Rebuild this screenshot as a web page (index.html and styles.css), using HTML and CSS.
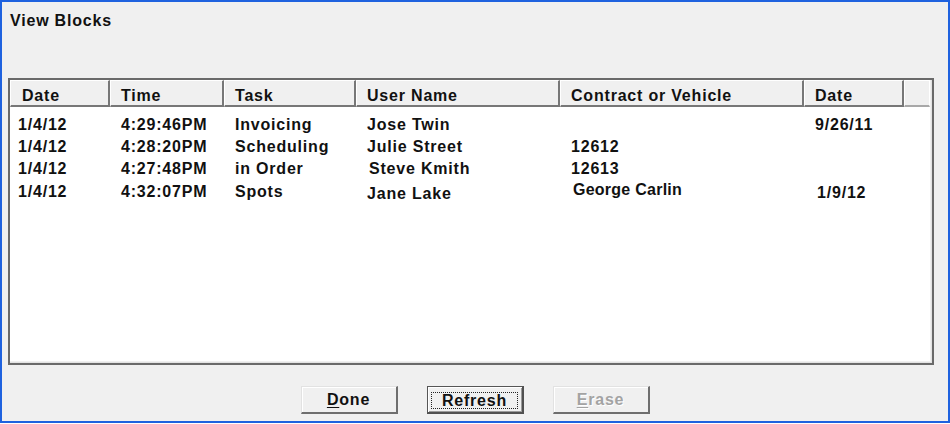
FILE: index.html
```html
<!DOCTYPE html>
<html>
<head>
<meta charset="utf-8">
<title>View Blocks</title>
<link rel="stylesheet" href="styles.css">
</head>
<body>
<div class="window">
  <div class="title">View Blocks</div>
  <div class="list">
    <div class="head">
      <div class="hcell first">Date</div>
      <div class="hcell">Time</div>
      <div class="hcell">Task</div>
      <div class="hcell">User Name</div>
      <div class="hcell">Contract or Vehicle</div>
      <div class="hcell">Date</div>
      <div class="hcell filler"></div>
    </div>
    <div class="rows">
      <div class="row">
        <div class="cell first">1/4/12</div>
        <div class="cell">4:29:46PM</div>
        <div class="cell">Invoicing</div>
        <div class="cell">Jose Twin</div>
        <div class="cell"></div>
        <div class="cell">9/26/11</div>
      </div>
      <div class="row">
        <div class="cell first">1/4/12</div>
        <div class="cell">4:28:20PM</div>
        <div class="cell">Scheduling</div>
        <div class="cell">Julie Street</div>
        <div class="cell">12612</div>
        <div class="cell"></div>
      </div>
      <div class="row">
        <div class="cell first">1/4/12</div>
        <div class="cell">4:27:48PM</div>
        <div class="cell">in Order</div>
        <div class="cell shift">Steve Kmith</div>
        <div class="cell">12613</div>
        <div class="cell"></div>
      </div>
      <div class="row">
        <div class="cell first">1/4/12</div>
        <div class="cell">4:32:07PM</div>
        <div class="cell">Spots</div>
        <div class="cell low">Jane Lake</div>
        <div class="cell pasted">George Carlin</div>
        <div class="cell lower shift">1/9/12</div>
      </div>
    </div>
  </div>
  <div class="buttons">
    <button class="btn"><u>D</u>one</button>
    <button class="btn default"><span class="focus">Refresh</span></button>
    <button class="btn disabled"><u>E</u>rase</button>
  </div>
</div>
</body>
</html>
```

FILE: styles.css
```css
html, body {
  margin: 0;
  padding: 0;
  background: #ffffff;
}

body {
  font-family: "Liberation Sans", Arial, sans-serif;
  font-weight: bold;
  font-size: 16px;
  letter-spacing: 0.8px;
  color: #111111;
}

.window {
  box-sizing: border-box;
  width: 950px;
  height: 423px;
  background: #f0f0f0;
  border: 2px solid #1f62df;
  padding: 0 14px 0 6px;
  display: flex;
  flex-direction: column;
}

.title {
  padding: 9px 0 0 2px;
  line-height: 20px;
  height: 20px;
}

.list {
  box-sizing: border-box;
  margin-top: 47px;
  width: 926px;
  height: 287px;
  border: 2px solid #6a6a6a;
  background: #ffffff;
  box-shadow: inset -1px -1px 0 #e3e3e3, inset -2px -2px 0 #f0f0f0;
}

.head {
  display: grid;
  grid-template-columns: 100px 114px 132px 204px 244px 100px 1fr;
  height: 27px;
  margin-right: 2px;
}

.hcell {
  box-sizing: border-box;
  height: 27px;
  background: #f0f0f0;
  border-top: 1px solid #ffffff;
  border-left: 1px solid #ffffff;
  border-right: 2px solid #777777;
  border-bottom: 2px solid #777777;
  padding: 5px 0 0 10px;
  line-height: 19px;
  white-space: nowrap;
  overflow: hidden;
}

.hcell.first {
  padding-left: 11px;
}

.hcell.filler {
  border-right: 1px solid #ffffff;
  border-bottom: 2px solid #a8a8a8;
}

.rows {
  padding-top: 6.5px;
}

.row {
  display: grid;
  grid-template-columns: 100px 114px 132px 204px 244px 100px 1fr;
  height: 22.4px;
}

.cell {
  line-height: 22px;
  padding-left: 11px;
  white-space: nowrap;
}

.cell.first {
  padding-left: 8px;
}

.cell.shift {
  padding-left: 13px;
}

.cell.low {
  padding-top: 2px;
}

.cell.lower {
  padding-top: 1.5px;
}

.cell.pasted {
  font-size: 16px;
  letter-spacing: 0.25px;
  padding-left: 13px;
  margin-top: -1.5px;
}

.buttons {
  display: flex;
  justify-content: center;
  gap: 29px;
  margin-top: 21px;
  padding-left: 8px;
}

.btn {
  box-sizing: border-box;
  width: 97px;
  height: 28px;
  padding: 1px 0 0 0;
  margin: 0;
  font-family: inherit;
  font-weight: bold;
  font-size: 16px;
  letter-spacing: 0.8px;
  color: #111111;
  background: #f0f0f0;
  border-style: solid;
  border-width: 1px 2px 2px 1px;
  border-color: #e2e2e2 #6e6e6e #6e6e6e #e2e2e2;
  box-shadow: inset 1px 1px 0 #ffffff;
  display: flex;
  align-items: center;
  justify-content: center;
  line-height: 18px;
}

.btn u {
  text-decoration-thickness: 1px;
  text-underline-offset: 2px;
}

.btn.default {
  border-color: #555555 #505050 #505050 #555555;
  box-shadow: inset 1px 1px 0 #ffffff, inset -1px -1px 0 #9a9a9a;
}

.focus {
  box-sizing: border-box;
  display: block;
  width: 87px;
  height: 17px;
  line-height: 15px;
  border: 1px dotted #222222;
  text-align: center;
}

.btn.disabled {
  color: #a3a3a3;
  text-shadow: 1px 1px 0 #ffffff;
}
```
